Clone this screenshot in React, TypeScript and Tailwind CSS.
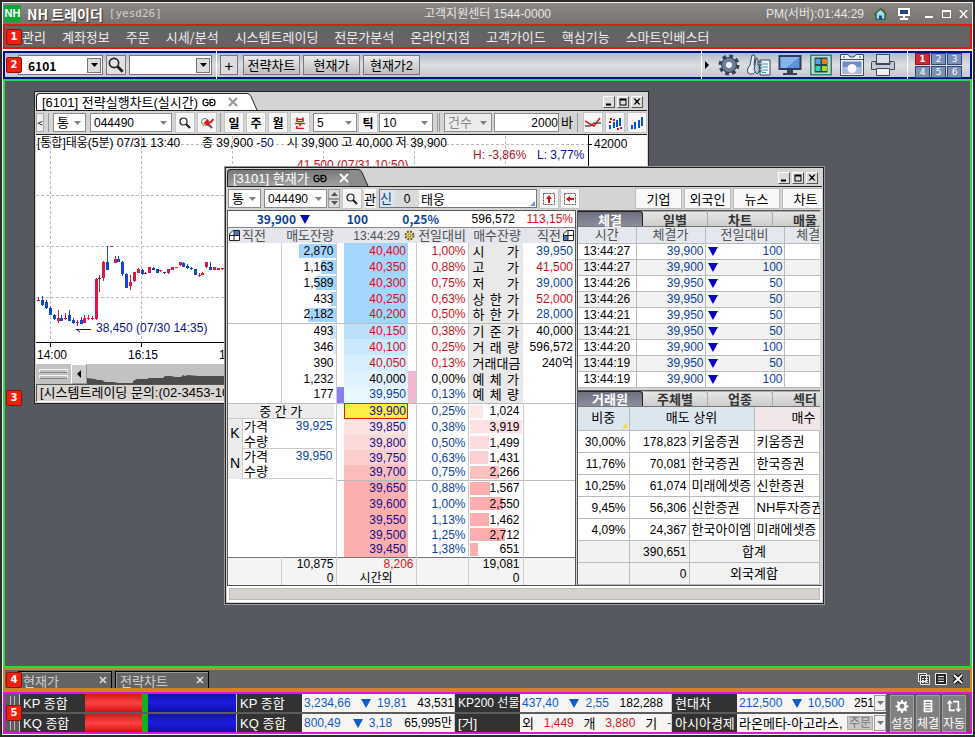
import { useState } from "react";
import type { ReactNode } from "react";

const NUM = "font-['Liberation_Sans','Noto_Sans_CJK_KR',sans-serif] text-[12px]";
const TXT = "font-['Liberation_Sans','Noto_Sans_CJK_KR',sans-serif] text-[13px]";
const BLUE = "text-[#0c3f9e]";
const RED = "text-[#cc1018]";

function Badge({ n, place }: { n: number; place: string }) {
  return (
    <span
      className={`absolute z-20 flex h-4 w-4 items-center justify-center rounded-[2px] border border-[#8a1408] bg-[#f02010] font-['DejaVu_Sans',sans-serif] text-[10px] leading-none font-bold text-white ${place}`}
    >
      {n}
    </span>
  );
}

function Caret({ className = "" }: { className?: string }) {
  return (
    <svg viewBox="0 0 7 4" className={`h-1 w-[7px] fill-current ${className}`} aria-hidden="true">
      <path d="M0 0h7L3.500 4z" />
    </svg>
  );
}

function Down({ className = "" }: { className?: string }) {
  return (
    <svg viewBox="0 0 10 9" className={`h-[9px] w-[10px] shrink-0 fill-current ${className}`} aria-hidden="true">
      <path d="M0 0h10L5 9z" />
    </svg>
  );
}

function Search({ className = "h-3 w-3" }: { className?: string }) {
  return (
    <svg viewBox="0 0 12 12" className={className} fill="none" stroke="#222" aria-hidden="true">
      <circle cx="4.500" cy="4.500" r="3.500" strokeWidth="1.200" />
      <path d="M7 7l4 4" strokeWidth="2.200" />
    </svg>
  );
}

function Select({ label, value, width, off = false }: { label: string; value: string; width: string; off?: boolean }) {
  return (
    <span className={`relative flex h-[19px] shrink-0 items-center border border-[#8c8c8c] ${off ? "bg-[#ececec] text-[#888]" : "bg-white text-black"} ${width}`}>
      <select aria-label={label} disabled={off} defaultValue={value} className={`h-full w-full appearance-none pl-[3px] leading-none ${/\d/.test(value) ? NUM : TXT}`}>
        <option>{value}</option>
      </select>
      <Caret className="pointer-events-none absolute right-1 text-[#808080]" />
    </span>
  );
}

function Tool({ children, label, color = "text-black" }: { children: ReactNode; label: string; color?: string }) {
  return (
    <button
      aria-label={label}
      className={`flex h-[19px] w-[18px] shrink-0 items-center justify-center border border-[#f8f8f8] bg-[#f6f6f6] text-[12px] leading-none font-bold shadow-[0_0_0_1px_#c4c4c4] ${color}`}
    >
      {children}
    </button>
  );
}

function LinkMark() {
  return (
    <svg viewBox="0 0 14 9" className="h-[9px] w-[14px]" fill="none" stroke="currentColor" strokeWidth="1.200" aria-hidden="true">
      <path d="M6 2.500C5 .8 1 .5 1 4.500s4 3.700 5 2V4.500H3.500M8 2.500C9 .8 13 .5 13 4.500s-4 3.700-5 2V1M8 4.500h3" />
    </svg>
  );
}

function WindowButtons() {
  const shapes = ["M2 6.500h5v2H2z", "M1.500 1.500h7v7h-7zM2.500 3.500v4h5v-4z", "M1.500 1.500h1.500l2 2 2-2h1.500L6 4.700l2.500 2.800H7L5 5.700l-2 1.800H1.500L4 4.700z"];
  const names = ["최소화", "최대화", "닫기"];
  return (
    <span className="flex gap-[2px] pr-1">
      {shapes.map((d, i) => (
        <button key={d} aria-label={names[i]} className="flex h-3 w-3 items-center justify-center border border-t-white border-r-[#555] border-b-[#555] border-l-white bg-[#ddd]">
          <svg viewBox="0 0 10 10" className="h-[10px] w-[10px]" fillRule="evenodd">
            <path d={d} />
          </svg>
        </button>
      ))}
    </span>
  );
}

function TitleTab({ title, active }: { title: string; active: boolean }) {
  return (
    <div className="flex h-[18px] items-end justify-between border-b border-[#222] bg-[#d4d4d4]">
      <div className="flex h-[17px]">
        <div
          className={`flex items-center gap-1 rounded-tl-[4px] border-t border-l border-[#222] pl-[5px] leading-none ${TXT} ${active ? "bg-linear-to-b from-[#777] to-[#a2a2a2] text-white" : "bg-white text-black"}`}
        >
          <span>{title}</span>
          <span className="text-black">
            <LinkMark />
          </span>
          <button aria-label="탭 닫기" className={`ml-[8px] ${active ? "text-white" : "text-[#999]"}`}>
            <svg viewBox="0 0 10 10" className="h-[10px] w-[10px]" stroke="currentColor" strokeWidth="2">
              <path d="M1 1l8 8M9 1L1 9" />
            </svg>
          </button>
        </div>
        <svg viewBox="0 0 20 17" className="h-[17px] w-5" aria-hidden="true">
          <path d="M0 .5h9q3 0 4 3L19 17H0z" fill={active ? "#8c8c8c" : "#fff"} />
          <path d="M0 .5h9q3 0 4 3L19 17" fill="none" stroke="#222" />
        </svg>
      </div>
      <div className="self-center">
        <WindowButtons />
      </div>
    </div>
  );
}

/* ---------- top bars ---------- */

const MENU = ["관리", "계좌정보", "주문", "시세/분석", "시스템트레이딩", "전문가분석", "온라인지점", "고객가이드", "핵심기능", "스마트인베스터"];

function TitleBar() {
  return (
    <header className="grid h-[21px] grid-cols-3 items-center bg-linear-to-b from-[#8c8885] to-[#757270] text-[#e6e6e6]">
      <div className="flex items-center gap-[6px] pl-[1px]">
        <span className="flex h-[17px] w-[17px] items-center justify-center bg-[#12a53a] font-['Liberation_Sans',sans-serif] text-[11px] font-bold text-white">NH</span>
        <h1 className="text-[14px] leading-none font-bold text-white [text-shadow:1px_1px_1px_#333]">NH 트레이더</h1>
        <span className="font-['DejaVu_Sans_Mono',monospace] text-[11px] leading-none text-[#d0d0d0]">[yesd26]</span>
      </div>
      <div className={`text-center leading-none ${NUM}`}>고객지원센터 1544-0000</div>
      <div className="flex items-center justify-end pr-1">
        <span className={`mr-[10px] leading-none ${NUM}`}>PM(서버):01:44:29</span>
        <button aria-label="홈" className="mr-[11px]">
          <svg viewBox="0 0 13 12" className="h-3 w-[13px]">
            <path d="M9 1h2v3H9z" fill="#d33" />
            <path d="M.5 6.500L6.500.8l6 5.700H11v5H2v-5z" fill="#a8d8f0" stroke="#1f6a30" strokeWidth="1.400" />
            <path d="M5 7.500h3v4H5z" fill="#244a80" />
          </svg>
        </button>
        <button aria-label="화면" className="mr-[15px]">
          <svg viewBox="0 0 12 12" className="h-3 w-3">
            <path d="M0 0h12v8H0z" fill="#fff" />
            <path d="M2 2h8v4H2z" fill="#2a4a70" />
            <path d="M5 8h2v2h3v2H2v-2h3z" fill="#fff" />
          </svg>
        </button>
        <span className="flex gap-2">
          {["M0 7h8v2H0z", "M0 1h9v8H0zM1 3v5h7V3z", "M0 1h2l2.500 3L7 1h2L5.500 5 9 9H7L4.500 6 2 9H0l3.500-4z"].map((d, i) => (
            <button key={d} aria-label={["최소화", "최대화", "닫기"][i]}>
              <svg viewBox="0 0 9 10" className="h-[10px] w-[9px] fill-white" fillRule="evenodd">
                <path d={d} />
              </svg>
            </button>
          ))}
        </span>
      </div>
    </header>
  );
}

function GearIcon() {
  return (
    <svg viewBox="0 0 22 22" className="h-[22px] w-[22px]">
      <circle cx="11" cy="11" r="8.500" fill="none" stroke="#34445c" strokeWidth="4" strokeDasharray="3.600 3.075" />
      <circle cx="11" cy="11" r="5.500" fill="none" stroke="#34445c" strokeWidth="5" />
      <circle cx="11" cy="11" r="5" fill="none" stroke="#6c7f9a" strokeWidth="4" />
      <circle cx="11" cy="11" r="3" fill="#eef2f6" />
    </svg>
  );
}

function KeysIcon() {
  return (
    <svg viewBox="0 0 24 22" className="h-[22px] w-6" stroke="#33485e">
      <path d="M5 1q3-1 3 2l-1 8q4 2 2 6t-6 3-2-6l2-3z" fill="#e6ebef" />
      <path d="M9 4q2 0 2 2v5q3 1 2 6l-3 3-3-4z" fill="#bcc8d4" />
      <path d="M13 6h10v15H13z" fill="#eef8fb" />
      <path d="M15 10h6M15 13h6M15 16h6M15 18.500h4" stroke="#3a9ab5" />
      <path d="M11 8h4M11 11h4M11 14h4M11 17h4" />
    </svg>
  );
}

function MonitorIcon() {
  return (
    <svg viewBox="0 0 24 22" className="h-[22px] w-6">
      <path d="M.5 1h23v15H.5z" fill="#2b3d58" />
      <path d="M2.500 3h19v11h-19z" fill="#5c93dc" />
      <path d="M2.500 3h19L8 14H2.500z" fill="#86b4ee" />
      <path d="M9 16h6v3h4v2H5v-2h4z" fill="#344459" />
    </svg>
  );
}

function TilesIcon() {
  return (
    <svg viewBox="0 0 24 22" className="h-[22px] w-6">
      <path d="M1 .5h22v21H1z" fill="#36806f" />
      <path d="M2.500 2h19v18h-19z" fill="#b9dccb" />
      <path d="M5.500 3.500h13v15h-13z" fill="#274a47" />
      <path d="M6.500 5h5v5h-5z" fill="#49a7dc" />
      <path d="M13 5h5v5h-5z" fill="#e8791c" />
      <path d="M6.500 12h5v5h-5z" fill="#32d5b5" />
      <path d="M13 12h5v5h-5z" fill="#a5dc18" />
    </svg>
  );
}

function CaptureIcon() {
  return (
    <svg viewBox="0 0 24 22" className="h-[22px] w-6">
      <path d="M.5.5H8L10 3h4l2-2.500h7.500v21H.5z" fill="#f2f4f7" stroke="#3a4a62" />
      <path d="M1 5.500h22" stroke="#3a4a62" />
      <path d="M2.500 7.500h19v12h-19z" fill="#6f8cc4" />
      <path d="M2.500 13h19v6.500h-19z" fill="#a9bce0" />
      <circle cx="12" cy="14.500" r="4.500" fill="#f6f8fc" />
      <path d="M3 3h2M19 3h2" stroke="#3a4a62" />
    </svg>
  );
}

function PrinterIcon() {
  return (
    <svg viewBox="0 0 24 22" className="h-[22px] w-6" stroke="#3d4958">
      <path d="M5.500.5h13v9h-13z" fill="#d8dde4" />
      <path d="M1.500 7.500q-1 0-1 1v7h23v-7q0-1-1-1H19v3H5v-3z" fill="#c3cad4" />
      <path d="M5 10.500h14" />
      <path d="M5.500 14.500h13v7h-13z" fill="#eef0f3" />
    </svg>
  );
}

function MainToolbar() {
  return (
    <div className="relative flex h-7 items-center border-2 border-[#0b0b88] bg-linear-to-b from-[#b4bac6] via-[#dcdee2] to-[#c2c8d2]">
      <Badge n={2} place="top-1 left-px" />
      <div className="flex flex-1 items-center gap-[3px] pl-[13px]">
        <label className="relative flex h-5 w-[85px] items-center border border-[#777] bg-white">
          <input aria-label="화면번호" defaultValue="6101" className="w-[66px] pl-[9px] text-[12px] leading-none font-bold" />
          <span className="absolute right-px flex h-[15px] w-[14px] items-center justify-center border border-[#777] bg-[#ddd]">
            <Caret />
          </span>
        </label>
        <button aria-label="검색" className="flex h-5 w-5 items-center justify-center border border-[#777] bg-[#e2e2e4]">
          <Search className="h-4 w-4" />
        </button>
        <label className="relative flex h-5 w-[83px] items-center border border-[#777] bg-white">
          <input aria-label="종목" className="w-16" />
          <span className="absolute right-px flex h-[15px] w-[14px] items-center justify-center border border-[#777] bg-[#ddd]">
            <Caret />
          </span>
        </label>
        <span className="ml-px h-7 w-px bg-white" />
        <button aria-label="추가" className="mr-[2px] h-5 w-[18px] border border-[#777] bg-[#dcdcde] text-[15px] leading-none">
          +
        </button>
        {["전략차트", "현재가", "현재가2"].map((t) => (
          <button key={t} className={`h-5 w-[57px] border border-[#777] bg-linear-to-b from-[#ececee] to-[#bdbdc0] leading-none whitespace-nowrap ${TXT}`}>
            {t}
          </button>
        ))}
      </div>
      <div className="flex items-center gap-[7px]">
        <span className="flex h-7 w-[10px] items-center border-l border-white pl-[3px]">
          <svg viewBox="0 0 4 8" className="h-2 w-1">
            <path d="M0 0l4 4-4 4z" />
          </svg>
        </span>
        {[GearIcon, KeysIcon, MonitorIcon, TilesIcon, CaptureIcon, PrinterIcon].map((Icon, i) => (
          <button key={i} aria-label={["설정", "인증", "모니터", "화면 배치", "화면 캡처", "인쇄"][i]}>
            <Icon />
          </button>
        ))}
        <span className="ml-[5px] h-7 w-px bg-white" />
        <div className="mr-2 grid grid-cols-3 gap-px">
          {[1, 2, 3, 4, 5, 6].map((n) => (
            <button
              key={n}
              className={`h-[12px] w-[15px] border font-['DejaVu_Sans',sans-serif] text-[9px] leading-[10px] text-white ${n === 1 ? "border-[#8a1a20] bg-[#d02830] font-bold" : "border-[#2e4a78] bg-[#7c90b8]"}`}
            >
              {n}
            </button>
          ))}
        </div>
      </div>
    </div>
  );
}

/* ---------- chart window ---------- */

// x, wick top, wick bottom, body top, body bottom, 1 = rise
const CANDLES: [number, number, number, number, number, number][] = [
  [38, 297, 301, 300, 301, 1], [42, 296, 306, 300, 305, 0], [46, 300, 309, 302, 308, 0], [50, 306, 315, 308, 315, 0],
  [54, 314, 320, 315, 319, 0], [58, 310, 323, 318, 321, 1], [61, 315, 321, 318, 321, 0], [65, 313, 320, 318, 319, 1],
  [69, 310, 321, 315, 321, 0], [73, 318, 324, 320, 323, 0], [77, 320, 326, 322, 323, 1], [81, 317, 324, 320, 324, 0],
  [84, 315, 323, 318, 323, 1], [88, 315, 320, 318, 319, 1], [92, 316, 320, 318, 319, 1], [96, 278, 320, 279, 319, 1],
  [99, 275, 292, 278, 279, 1], [103, 261, 281, 262, 278, 1], [107, 246, 270, 262, 270, 0], [111, 246, 247, 246, 247, 1],
  [115, 256, 263, 259, 263, 1], [118, 256, 262, 259, 262, 0], [122, 261, 276, 262, 274, 0], [126, 273, 288, 274, 288, 0],
  [130, 275, 290, 282, 286, 1], [134, 272, 282, 272, 281, 1], [138, 268, 273, 269, 273, 1], [142, 269, 275, 270, 274, 0],
  [145, 272, 274, 273, 274, 1], [149, 267, 273, 267, 273, 1], [153, 267, 270, 268, 270, 0], [157, 269, 273, 269, 273, 0],
  [160, 270, 272, 270, 271, 1], [164, 272, 274, 272, 273, 0], [168, 269, 274, 269, 273, 1], [172, 267, 270, 267, 270, 1],
  [176, 267, 268, 267, 268, 1], [180, 262, 266, 262, 265, 1], [183, 262, 267, 263, 267, 0], [187, 264, 269, 266, 268, 0],
  [191, 267, 270, 268, 269, 0], [195, 269, 275, 269, 275, 0], [199, 273, 277, 275, 276, 1], [202, 272, 275, 273, 275, 1],
  [206, 262, 268, 262, 267, 1], [210, 262, 270, 267, 270, 0], [214, 267, 270, 267, 270, 1], [218, 268, 270, 268, 270, 1],
  [222, 268, 270, 268, 269, 1],
];

function ChartWindow() {
  return (
    <section className="absolute top-[10px] left-[29px] flex h-[313px] w-[615px] flex-col border border-[#222] bg-[#d4d4d4] p-px">
      <TitleTab title="[6101] 전략실행차트(실시간)" active={false} />
      <div className="flex h-6 shrink-0 items-center gap-1 border-b border-[#222]">
        <button aria-label="접기" className="h-[19px] w-2 border border-[#aaa] bg-[#eee] text-[10px] leading-none">
          &lt;
        </button>
        <span className="h-[19px] w-px bg-[#999]" />
        <Select label="시장" value="통" width="w-[33px]" />
        <Select label="종목코드" value="044490" width="w-[82px]" />
        <Tool label="검색">
          <Search />
        </Tool>
        <Tool label="찾기">
          <svg viewBox="0 0 14 12" className="h-3 w-[14px]" fill="none">
            <circle cx="5" cy="5" r="3.500" stroke="#777" />
            <path d="M8 7l4 4" stroke="#555" strokeWidth="2" />
            <path d="M13 2q-1 4-6 4M8 3L5 6l4 2.500" stroke="#e01010" strokeWidth="2" />
          </svg>
        </Tool>
        <span className="h-[19px] w-px bg-[#999]" />
        <Tool label="일">일</Tool>
        <Tool label="주">주</Tool>
        <Tool label="월">월</Tool>
        <Tool label="분" color="text-[#e01010]">
          분
        </Tool>
        <div className="flex items-center gap-[2px]">
          <Select label="분 주기" value="5" width="w-[44px]" />
          <Tool label="틱">틱</Tool>
          <Select label="틱 주기" value="10" width="w-[54px]" />
          <span className="mx-[2px] h-[19px] w-[3px] border-x border-[#999]" />
          <Select label="건수" value="건수" width="w-[48px]" off />
          <label className={`flex items-center gap-[2px] leading-none ${NUM}`}>
            <input aria-label="봉 개수" defaultValue="2000" className="h-[19px] w-[65px] border border-[#8c8c8c] bg-white text-right" />
            <span className="text-[13px]">바</span>
          </label>
          <span className="mx-[2px] h-[19px] w-px bg-[#999]" />
        </div>
        <Tool label="추세">
          <svg viewBox="0 0 16 14" className="h-[14px] w-4" fill="none">
            <path d="M0 10h5l4-3h7" stroke="#555" strokeWidth="1.500" />
            <path d="M0 5l5 3 4 2 6-8" stroke="#d01818" strokeWidth="1.500" />
          </svg>
        </Tool>
        <Tool label="봉 점">
          <svg viewBox="0 0 14 14" className="h-[14px] w-[14px]" fill="#0c4fd0">
            <path d="M1 9h2v4H1zM5 6h2v6H5zM8 4h2v7H8zM11 2h2v8h-2z" />
            <path d="M2 2h2v2H2zM5 3h2v2H5zM1 5h2v2H1zM12 11h2v2h-2zM9 12h2v2H9z" fill="#e01010" />
          </svg>
        </Tool>
        <Tool label="봉">
          <svg viewBox="0 0 14 14" className="h-[14px] w-[14px]" fill="#0c4fd0">
            <path d="M1 9h2v4H1zM4 6h2v7H4zM8 4h2v8H8zM11 1h2v9h-2z" />
          </svg>
        </Tool>
      </div>
      <svg viewBox="36 135 611 229" preserveAspectRatio="xMinYMin slice" className={`h-[229px] w-full shrink-0 bg-white ${NUM}`}>
        <path d="M50.500 136v206M141.500 136v206M232.500 136v206M323.500 136v206M414.500 136v206M505.500 136v206M36 144.500h552M36 195.500h552M36 246.500h552M36 297.500h552" stroke="#bbb" strokeDasharray="3 2" />
        <path d="M36 342.500h611M588.500 135v207M588 144.500h4M50.500 342v5M141.500 342v5M232.500 342v5" stroke="#000" fill="none" />
        {CANDLES.map(([x, wt, wb, bt, bb, up]) => (
          <g key={x} fill={up ? "#d81848" : "#1048d0"}>
            <rect x={x} y={wt} width="1" height={wb - wt} />
            <rect x={x - 1} y={bt} width="3" height={bb - bt} />
          </g>
        ))}
        <path d="M76 329.500h15M76 329l4 3" stroke="#10108c" fill="none" />
        <text x="37" y="147">[통합]태웅(5분) 07/31 13:40</text>
        <text x="202" y="147">
          종 39,900 <tspan fill="#10108c">-50</tspan>
        </text>
        <text x="287" y="147">시 39,900 고 40,000 저 39,900</text>
        <text x="473" y="159" fill="#b01020">H: -3,86%</text>
        <text x="537" y="159" fill="#10108c">L: 3,77%</text>
        <text x="297" y="169" fill="#c01020">41,500 (07/31 10:50)</text>
        <text x="594" y="148">42000</text>
        <text x="96" y="332" fill="#10108c">38,450 (07/30 14:35)</text>
        <text x="37" y="359">14:00</text>
        <text x="128" y="359">16:15</text>
        <text x="219" y="359">10:10</text>
      </svg>
      <div className="flex h-5 shrink-0 bg-[#c2c2c2]">
        <span className="m-[3px] mt-[5px] flex h-[10px] w-[29px] flex-col justify-between">
          <span className="h-1 border border-[#f4f4f4] border-b-[#888]" />
          <span className="h-1 border border-[#f4f4f4] border-b-[#888]" />
        </span>
        <button aria-label="왼쪽" className="flex w-4 items-center justify-center border border-t-white border-r-[#999] border-b-[#999] border-l-white bg-[#cdcdcd]">
          <svg viewBox="0 0 4 8" className="h-2 w-1">
            <path d="M4 0v8L0 4z" />
          </svg>
        </button>
        <svg viewBox="0 0 140 20" className="h-5 w-[140px]" fill="#4c4c4c">
          <path d="M0 14l8 1 2 1h5l3 2h8l6 1h14v-2l4-2h10l2-1h14l2-2h6l4 1h6l2-2 2 1 3-1 10 1h31v10H0z" />
        </svg>
      </div>
      <div className={`flex-1 border border-t-[#555] border-r-white border-b-white border-l-[#555] bg-[#d8d4d0] pl-[3px] leading-[15px] ${TXT}`}>[시스템트레이딩 문의:(02-3453-1052)]</div>
    </section>
  );
}

/* ---------- quote window ---------- */

const ASKS: [string, string, string, string[], string, string, number][] = [
  ["2,870", "40,400", "1,00%", ["시", "가"], "39,950", BLUE, 37],
  ["1,163", "40,350", "0,88%", ["고", "가"], "41,500", RED, 15],
  ["1,589", "40,300", "0,75%", ["저", "가"], "39,000", BLUE, 20],
  ["433", "40,250", "0,63%", ["상", "한", "가"], "52,000", RED, 5],
  ["2,182", "40,200", "0,50%", ["하", "한", "가"], "28,000", BLUE, 28],
  ["493", "40,150", "0,38%", ["기", "준", "가"], "40,000", "text-black", 6],
  ["346", "40,100", "0,25%", ["거", "래", "량"], "596,572", "text-black", 3],
  ["390", "40,050", "0,13%", ["거래대금"], "240억", "text-black", 0],
  ["1,232", "40,000", "0,00%", ["예", "체", "가"], "", "", 0],
  ["177", "39,950", "0,13%", ["예", "체", "량"], "", "", 0],
];

const BIDS: [string, string, string, number][] = [
  ["39,900", "0,25%", "1,024", 13], ["39,850", "0,38%", "3,919", 52], ["39,800", "0,50%", "1,499", 19],
  ["39,750", "0,63%", "1,431", 18], ["39,700", "0,75%", "2,266", 29], ["39,650", "0,88%", "1,567", 20],
  ["39,600", "1,00%", "2,550", 33], ["39,550", "1,13%", "1,462", 19], ["39,500", "1,25%", "2,712", 35],
  ["39,450", "1,38%", "651", 8],
];

const ASK_BG = ["bg-[#a4d6fc]", "bg-[#a4d6fc]", "bg-[#a4d6fc]", "bg-[#a4d6fc]", "bg-[#a4d6fc]", "bg-[#bce0fc]", "bg-[#cae8fe]", "bg-[#d6eefe]", "bg-[#e0f2fe]", "bg-[#e8f6fe]"];
const ASK_BAR = ["bg-[#a4d6fc]", "bg-[#a4d6fc]", "bg-[#a4d6fc]", "bg-[#a4d6fc]", "bg-[#a4d6fc]", "bg-[#cfe6fa]", "bg-[#dceefc]", "bg-white", "bg-white", "bg-white"];
const BID_BG = ["bg-[#fbee45]", "bg-[#fde2e2]", "bg-[#fddada]", "bg-[#fccece]", "bg-[#fbbcbc]", "bg-[#fdaeae]", "bg-[#fdaeae]", "bg-[#fdaeae]", "bg-[#fdaeae]", "bg-[#fdaeae]"];
const BAR_BG = ["bg-[#fde6ea]", "bg-[#fde0e4]", "bg-[#fddade]", "bg-[#fcd0d2]", "bg-[#fcc0c0]", "bg-[#fdaeae]", "bg-[#fdaeae]", "bg-[#fdaeae]", "bg-[#fdaeae]", "bg-[#fdaeae]"];

function PageMark({ flip = false }: { flip?: boolean }) {
  return (
    <svg viewBox="0 0 11 11" className="h-[11px] w-[11px]">
      <path d="M.5 4L4 .5h6.500v10H.5z" fill="#fff" stroke="#222" />
      <path d={flip ? "M1 6h4v4H1z" : "M5 1h5v4.500H5z"} fill="#4878b8" />
      <path d="M5 1v9M1 5.500h9" stroke="#222" />
    </svg>
  );
}

function OrderBook() {
  return (
    <div className="flex w-[349px] shrink-0 flex-col border border-[#555] bg-white">
      <div className="grid h-[17px] shrink-0 grid-cols-[82px_62px_71px_76px_58px] items-center border-b border-[#888] text-right leading-none">
        <span className={`flex items-center justify-end gap-1 text-[12px] font-bold ${BLUE}`}>
          39,900
          <Down className="text-[#0c0cb8]" />
        </span>
        <b className={`pr-1 text-[12px] ${BLUE}`}>100</b>
        <b className={`pr-1 text-[12px] ${BLUE}`}>0,25%</b>
        <span className={`pr-1 ${NUM}`}>596,572</span>
        <span className={`pr-1 ${NUM} ${RED}`}>113,15%</span>
      </div>
      <table className={`w-full table-fixed border-collapse text-right ${NUM}`}>
        <colgroup>
          <col className="w-[53px]" />
          <col className="w-[55px]" />
          <col className="w-2" />
          <col className="w-16" />
          <col className="w-2" />
          <col className="w-[52px]" />
          <col className="w-[55px]" />
          <col />
        </colgroup>
        <thead className="bg-[#e4e6ec] text-[#505050]">
          <tr className="h-[15px] text-[13px] leading-[14px] whitespace-nowrap">
            <th className="p-0 font-normal">
              <span className="flex items-center gap-[2px] pl-px">
                <PageMark />
                직전
              </span>
            </th>
            <th className="p-0 pr-[2px] font-normal">매도잔량</th>
            <th className="p-0" />
            <th className="p-0 pr-2 text-[12px] font-normal">13:44:29</th>
            <th className="p-0">
              <svg viewBox="0 0 11 11" className="-ml-1 h-[11px] w-[11px]">
                <circle cx="5.500" cy="5.500" r="4" fill="#f4e050" stroke="#6a6040" strokeWidth="2" strokeDasharray="2 1.140" />
                <circle cx="5.500" cy="5.500" r="1.500" fill="#fff" stroke="#6a6040" />
              </svg>
            </th>
            <th className="p-0 pr-[2px] font-normal">전일대비</th>
            <th className="p-0 pr-[2px] font-normal">매수잔량</th>
            <th className="p-0 font-normal">
              <span className="flex items-center justify-end gap-[2px] pr-px">
                직전
                <PageMark flip />
              </span>
            </th>
          </tr>
        </thead>
        <tbody>
          {ASKS.map(([qty, price, pct, name, value, tone, bar], i) => (
            <tr key={price} className={`h-4 leading-[15px] ${i === 5 ? "border-t border-[#bbb]" : ""}`}>
              <td className="border-r border-[#ccc] p-0" />
              <td className="relative border-r border-[#ccc] p-0 pr-[2px]">
                <span className={`absolute top-px right-0 h-[14px] ${ASK_BAR[i]}`} style={{ width: bar }} />
                <span className="relative">{qty}</span>
              </td>
              <td className={`p-0 ${i === 9 ? "bg-[#8880f0]" : ""}`} />
              <td className={`p-0 pr-[2px] ${ASK_BG[i]} ${i < 8 ? RED : i === 9 ? BLUE : "text-black"}`}>{price}</td>
              <td className={`border-r border-[#ccc] p-0 ${i > 7 ? "bg-[#f2b8d2]" : ""}`} />
              <td className={`border-r border-[#ccc] p-0 pr-[2px] ${i < 8 ? RED : i === 9 ? BLUE : "text-black"}`}>{pct}</td>
              <td className="bg-[#e9e9e9] p-0 px-1 text-[13px] whitespace-nowrap">
                <span className="flex justify-between">
                  {name.map((c) => (
                    <span key={c}>{c}</span>
                  ))}
                </span>
              </td>
              <td className={`p-0 pr-[2px] ${tone}`}>{value}</td>
            </tr>
          ))}
          {BIDS.map(([price, pct, qty, bar], i) => (
            <tr key={price} className={`leading-[14px] ${i % 5 < 2 ? "h-4" : "h-[15px]"} ${i % 5 === 0 ? "border-t border-[#bbb]" : ""}`}>
              {i === 0 && (
                <td colSpan={2} rowSpan={10} className="border-r border-[#ccc] p-0 pr-[2px] align-top">
                  <div className="h-[15px] border-b border-[#ccc] bg-[#ececec] text-center text-[13px] leading-[15px]">중 간 가</div>
                  {[["K", "39,925"], ["N", "39,950"]].map(([m, v]) => (
                    <div key={m} className="grid h-[30px] grid-cols-[15px_1fr_auto] border-b border-[#ccc] text-left leading-[15px]">
                      <span className="row-span-2 flex items-center justify-center border-r border-[#ccc] bg-[#ececec] text-[14px]">{m}</span>
                      <span className="pl-px text-[13px]">가격</span>
                      <span className={`pr-px ${BLUE}`}>{v}</span>
                      <span className="pl-px text-[13px]">수량</span>
                    </div>
                  ))}
                </td>
              )}
              <td className="p-0" />
              <td className={`p-0 pr-[2px] text-[#10108c] ${BID_BG[i]} ${i === 0 ? "outline outline-1 -outline-offset-1 outline-[#e02010]" : ""}`}>{price}</td>
              <td className="border-r border-[#ccc] p-0" />
              <td className={`border-r border-[#ccc] p-0 pr-[2px] ${BLUE}`}>{pct}</td>
              <td className="relative border-r border-[#ccc] p-0 pr-[3px]">
                <span className={`absolute top-px left-px h-[13px] ${BAR_BG[i]}`} style={{ width: bar }} />
                <span className="relative">{qty}</span>
              </td>
              <td className="p-0" />
            </tr>
          ))}
        </tbody>
        <tfoot className="bg-[#f4f4f4]">
          {[["10,875", "8,206", "19,081"], ["0", "시간외", "0"]].map(([a, b, c], i) => (
            <tr key={b} className={`h-[14px] leading-[13px] ${i === 0 ? "border-t border-[#777]" : ""}`}>
              <td className="border-r border-[#ccc] p-0" />
              <td className="border-r border-[#ccc] p-0 pr-[2px]">{a}</td>
              <td colSpan={3} className={`border-r border-[#ccc] p-0 ${i === 0 ? "pr-[2px] text-[#e01010]" : "text-center"}`}>{b}</td>
              <td className="border-r border-[#ccc] p-0" />
              <td className="border-r border-[#ccc] p-0 pr-[3px]">{c}</td>
              <td className="p-0" />
            </tr>
          ))}
        </tfoot>
      </table>
    </div>
  );
}

function PanelTabs({ names }: { names: string[] }) {
  const [on, setOn] = useState(0);
  return (
    <div className="flex h-4 shrink-0 border-b border-[#777]" role="tablist">
      {names.map((t, i) => (
        <button
          key={t}
          role="tab"
          aria-selected={i === on}
          onClick={() => setOn(i)}
          className={`h-[15px] w-[65px] shrink-0 rounded-tr-[3px] border-t border-r text-[13px] leading-none font-bold ${i === on ? "border-[#222] bg-linear-to-b from-[#6e7080] to-[#8c8e9c] text-white" : "border-[#aaa] bg-linear-to-b from-[#e6e6e6] to-[#cdcdcd] text-[#333]"}`}
        >
          {t}
        </button>
      ))}
    </div>
  );
}

const TRADES: [string, string, string][] = [
  ["13:44:27", "39,900", "100"], ["13:44:27", "39,900", "100"], ["13:44:26", "39,950", "50"],
  ["13:44:26", "39,950", "50"], ["13:44:21", "39,950", "50"], ["13:44:21", "39,950", "50"],
  ["13:44:20", "39,900", "100"], ["13:44:19", "39,950", "50"], ["13:44:19", "39,900", "100"],
];

const BROKERS: [string, string, string, string][] = [
  ["30,00%", "178,823", "키움증권", "키움증권"],
  ["11,76%", "70,081", "한국증권", "한국증권"],
  ["10,25%", "61,074", "미래에셋증", "신한증권"],
  ["9,45%", "56,306", "신한증권", "NH투자증권"],
  ["4,09%", "24,367", "한국아이엠", "미래에셋증"],
];

function SidePanel() {
  return (
    <div className="ml-px flex min-w-0 flex-1 flex-col overflow-hidden border-t border-l border-[#555] bg-[#d4d4d4]">
      <PanelTabs names={["체결", "일별", "차트", "매물"]} />
      <table className={`w-[267px] table-fixed border-collapse bg-white text-right ${NUM}`}>
        <colgroup>
          <col className="w-[58px]" />
          <col className="w-[69px]" />
          <col className="w-[79px]" />
          <col />
        </colgroup>
        <thead>
          <tr className="h-4 bg-[#e4e8ee] text-center text-[13px] leading-[15px] text-[#505050]">
            {["시간", "체결가", "전일대비", "체결량"].map((h) => (
              <th key={h} className="border-r border-b border-[#bbb] p-0 font-normal">
                {h}
              </th>
            ))}
          </tr>
        </thead>
        <tbody>
          {TRADES.map(([t, p, d], i) => (
            <tr key={i} className={`h-4 leading-[15px] ${i % 2 ? "bg-[#f2f2f2]" : "bg-white"}`}>
              <td className="border-r border-b border-[#bbb] p-0 text-center">{t}</td>
              <td className={`border-r border-b border-[#bbb] p-0 pr-px ${BLUE}`}>{p}</td>
              <td className={`border-r border-b border-[#bbb] p-0 ${BLUE}`}>
                <span className="flex items-center justify-between pr-px pl-[2px]">
                  <Down className="text-[#0808c0]" />
                  {d}
                </span>
              </td>
              <td className="border-b border-[#bbb] p-0" />
            </tr>
          ))}
        </tbody>
      </table>
      <div className="mt-[2px] border-t border-[#555]" />
      <PanelTabs names={["거래원", "주체별", "업종", "섹터"]} />
      <table className={`w-[302px] table-fixed border-collapse bg-white text-left ${TXT}`}>
        <colgroup>
          <col className="w-[51px]" />
          <col className="w-[60px]" />
          <col className="w-[65px]" />
          <col className="w-[65px]" />
          <col />
        </colgroup>
        <thead>
          <tr className="h-6 text-center leading-[18px]">
            <th className="relative border-r border-b border-[#bbb] bg-[#dce6ef] p-0 font-normal">
              비중
              <svg viewBox="0 0 5 5" className="absolute right-[2px] bottom-[2px] h-[5px] w-[5px] fill-[#f4dc20]">
                <path d="M5 0v5H0z" />
              </svg>
            </th>
            <th colSpan={2} className="border-r border-b border-[#bbb] bg-[#dce6ef] p-0 font-normal">
              매도 상위
            </th>
            <th colSpan={2} className="border-b border-[#bbb] bg-[#f1e6e8] p-0 font-normal">
              매수 상위
            </th>
          </tr>
        </thead>
        <tbody>
          {BROKERS.map(([w, n, s, b]) => (
            <tr key={w} className="h-[22px] leading-[18px] whitespace-nowrap">
              <td className="border-r border-b border-[#bbb] p-0 pr-[3px] text-right text-[12px]">{w}</td>
              <td className="border-r border-b border-[#bbb] p-0 pr-[2px] text-right text-[12px]">{n}</td>
              <td className="border-r border-b border-[#bbb] p-0 pl-[2px]">{s}</td>
              <td className="border-r border-b border-[#bbb] p-0 pl-[2px]">{b}</td>
              <td className="border-b border-[#bbb] p-0" />
            </tr>
          ))}
          {[["390,651", "합계"], ["0", "외국계합"]].map(([n, t]) => (
            <tr key={t} className="h-[22px] bg-[#f2f2f2] leading-[18px]">
              <td className="border-r border-b border-[#bbb] p-0" />
              <td className="border-r border-b border-[#bbb] p-0 pr-[2px] text-right text-[12px]">{n}</td>
              <td colSpan={2} className="border-r border-b border-[#bbb] p-0 text-center">
                {t}
              </td>
              <td className="border-b border-[#bbb] p-0" />
            </tr>
          ))}
        </tbody>
      </table>
    </div>
  );
}

function QuoteWindow() {
  return (
    <section className="absolute top-[86px] left-[220px] flex h-[437px] w-[599px] flex-col border border-[#222] bg-[#d4d4d4] p-px shadow-[0_0_0_1px_#999]">
      <TitleTab title="[3101] 현재가" active />
      <div className="flex h-[23px] shrink-0 items-center gap-[3px] overflow-hidden pl-px">
        <Select label="시장" value="통" width="w-[33px]" />
        <Select label="종목코드" value="044490" width="w-[63px]" />
        <span className="-ml-[2px] flex h-[19px] w-3 flex-col">
          {["위", "아래"].map((d) => (
            <button key={d} aria-label={d} className="flex h-1/2 w-3 items-center justify-center border border-[#999] bg-[#ddd]">
              <Caret className={`text-[#555] ${d === "위" ? "rotate-180" : ""}`} />
            </button>
          ))}
        </span>
        <Tool label="검색">
          <Search />
        </Tool>
        <button className="h-[19px] w-4 bg-[#f6f6f6] text-[13px] leading-none">관</button>
        <span className={`relative flex h-[19px] w-[158px] items-center border border-[#777] bg-white leading-none ${TXT}`}>
          <span className={`w-[15px] bg-[#dce4ee] py-[2px] ${BLUE}`}>신</span>
          <span className="flex h-full w-6 items-center justify-center bg-[#dadada] text-[12px]">0</span>
          <input aria-label="종목명" defaultValue="태웅" className="min-w-0 flex-1 pl-[2px]" />
          <svg viewBox="0 0 5 5" className="absolute right-px bottom-px h-[5px] w-[5px] fill-[#6a98d8]">
            <path d="M5 0v5H0z" />
          </svg>
        </span>
        {["M7 3l3 4H8v4H6V7H4z", "M3 7l4-3v2h4v2H7v2z"].map((d, i) => (
          <Tool key={d} label={i ? "좌측 정렬" : "상단 정렬"}>
            <svg viewBox="0 0 14 14" className="h-[14px] w-[14px]">
              <path d="M1.500 1.500h11v11h-11z" fill="#fff" stroke="#555" strokeDasharray="2 1" />
              <path d={d} fill="#e01010" />
            </svg>
          </Tool>
        ))}
        <span className="ml-[54px] flex gap-1">
          {["기업", "외국인", "뉴스", "차트"].map((t) => (
            <button key={t} className="h-[19px] w-[45px] shrink-0 bg-[#f8f8f8] text-[13px] leading-none shadow-[0_0_0_1px_#bbb]">
              {t}
            </button>
          ))}
        </span>
      </div>
      <div className="flex min-h-0 flex-1 overflow-hidden pr-[2px]">
        <OrderBook />
        <SidePanel />
      </div>
      <div className="h-[17px] shrink-0 border-t border-[#555] bg-white p-[2px]">
        <div className="h-3 border border-[#bbb] bg-[#d6d2ce]" />
      </div>
    </section>
  );
}

/* ---------- bottom bars ---------- */

function TaskBar() {
  return (
    <div className="relative flex h-6 items-end justify-between border-2 border-b-[4px] border-[#d08420] bg-[#646464] text-[#d0d0d0]">
      <Badge n={4} place="top-0.5 left-px" />
      <div className="flex gap-[3px] pl-[13px]">
        {["현재가", "전략차트"].map((t) => (
          <div key={t} className="flex h-[17px] w-[94px] items-center justify-between border border-b-0 border-black px-1 text-[13px] leading-none shadow-[inset_1px_1px_0_#999]">
            <button>{t}</button>
            <button aria-label={`${t} 닫기`}>
              <svg viewBox="0 0 8 8" className="h-2 w-2" stroke="#ddd" strokeWidth="1.600">
                <path d="M1 1l6 6M7 1L1 7" />
              </svg>
            </button>
          </div>
        ))}
      </div>
      <div className="flex gap-[5px] self-center pr-[6px]">
        <button aria-label="창 목록">
          <svg viewBox="0 0 12 12" className="h-3 w-3" stroke="#eee" fill="#444">
            <path d="M.5.5h8v8h-8zM2.500 2.500h9v9h-9z" />
            <path d="M4 5.500h2M7 5.500h3M4 7.500h2M7 7.500h3M4 9.500h2M7 9.500h3" />
          </svg>
        </button>
        <button aria-label="정렬">
          <svg viewBox="0 0 12 12" className="h-3 w-3" stroke="#eee" fill="#222">
            <path d="M.5.5h11v11H.5zM3 3.500h6M3 6h6M3 8.500h6" />
          </svg>
        </button>
        <button aria-label="모두 닫기">
          <svg viewBox="0 0 12 12" className="h-3 w-3">
            <path d="M2 2l8 8M10 2l-8 8" stroke="#000" strokeWidth="4" />
            <path d="M2 2l8 8M10 2l-8 8" stroke="#fff" strokeWidth="2" />
          </svg>
        </button>
      </div>
    </div>
  );
}

function Gauge() {
  return (
    <div className="flex h-full w-[151px]">
      <span className="w-[57px] bg-linear-to-b from-[#d01818] via-[#ff4040] to-[#d01010]" />
      <span className="w-[6px] bg-[#10b418]" />
      <span className="flex-1 bg-linear-to-b from-[#1414a8] via-[#1c1ce0] to-[#1010a8]" />
    </div>
  );
}

function Tag({ children, size = "text-[13px]" }: { children: ReactNode; size?: string }) {
  return <span className={`flex h-full w-[66px] shrink-0 items-center overflow-hidden border-l border-[#ccc] bg-[#323232] pl-[3px] whitespace-nowrap text-white ${size}`}>{children}</span>;
}

const CELL = "flex h-full items-center justify-between overflow-hidden bg-[#f6f5f3] pl-[2px] whitespace-nowrap text-black";
const UP_BLUE = "text-[#0c5cd0]";

function Fall({ children }: { children: ReactNode }) {
  return (
    <span className={`flex items-center gap-[6px] ${UP_BLUE}`}>
      <Down />
      {children}
    </span>
  );
}

function DropButton() {
  return (
    <button aria-label="펼치기" className="flex h-4 w-3 shrink-0 items-center justify-center border border-[#999] bg-[#f0f0f0] text-[#777]">
      <Caret />
    </button>
  );
}

function TickerBar() {
  return (
    <footer className="relative flex h-[42px] items-center border-2 border-[#e014d8] bg-[#5c5c5c] px-px pr-1">
      <Badge n={5} place="top-[11px] left-px" />
      <span className="mx-1 h-[34px] w-[5px] border-x border-[#bbb]" />
      <div className={`flex min-w-0 flex-1 flex-col gap-[2px] leading-none ${NUM}`}>
        <div className="flex h-[18px]">
          <Tag>KP 종합</Tag>
          <Gauge />
          <Tag>KP 종합</Tag>
          <span className={`w-[152px] ${CELL}`}>
            <span className={UP_BLUE}>3,234,66</span>
            <Fall>19,81</Fall>
            <span>43,531</span>
          </span>
          <Tag size="text-[12px]">KP200 선물</Tag>
          <span className={`w-[151px] pr-2 ${CELL}`}>
            <span className={UP_BLUE}>437,40</span>
            <Fall>2,55</Fall>
            <span>182,288</span>
          </span>
          <Tag>현대차</Tag>
          <span className={`flex-1 ${CELL}`}>
            <span className={UP_BLUE}>212,500</span>
            <Fall>10,500</Fall>
            <span className="flex items-center">
              251
              <DropButton />
            </span>
          </span>
        </div>
        <div className="flex h-[18px]">
          <Tag>KQ 종합</Tag>
          <Gauge />
          <Tag>KQ 종합</Tag>
          <span className={`w-[152px] pr-[2px] ${CELL}`}>
            <span className={UP_BLUE}>800,49</span>
            <Fall>3,18</Fall>
            <span>65,995만</span>
          </span>
          <Tag>[거]</Tag>
          <span className={`w-[151px] ${CELL}`}>
            <span className="text-[13px]">외</span>
            <span className="text-[#d81818]">1,449</span>
            <span className="text-[13px]">개</span>
            <span className="text-[#d81818]">3,880</span>
            <span className="text-[13px]">기</span>
            <span className={UP_BLUE}>-</span>
          </span>
          <Tag>아시아경제</Tag>
          <span className={`flex-1 ${CELL}`}>
            <span className="text-[13px]">라온메타-아고라스,</span>
            <span className="flex items-center gap-px">
              <button className="h-[14px] w-[26px] border border-[#aaa] bg-[#c8c8c8] text-[12px] leading-none whitespace-nowrap text-[#777]">주문</button>
              <DropButton />
            </span>
          </span>
        </div>
      </div>
      <div className="ml-1 flex gap-[2px]">
        {[
          ["설정", "M7 1h2l.4 2 1.500.6L12.600 2.400 14 3.800l-1.200 1.700.6 1.500 2 .4v2l-2 .4-.6 1.500L14 13l-1.400 1.400-1.700-1.200-1.500.6L9 16H7l-.4-2.200-1.500-.6-1.700 1.200L2 13l1.200-1.700-.6-1.500-2-.4v-2l2-.4.6-1.500L2 3.800l1.400-1.400 1.700 1.200L6.600 3zM8 5.500a2.800 2.800 0 100 5.600 2.800 2.800 0 000-5.600z"],
          ["체결", "M3 1h10v14H3zM5 3v1.500h6V3zM5 6v1.500h6V6zM5 9v1.500h6V9zM5 12v1h6v-1z"],
          ["자동", "M3 1l3.500 4H4v7h5v2H2V5H-.5zM13 15l-3.500-4H12V4H7V2h7v9h2.500z"],
        ].map(([t, d]) => (
          <button key={t} className="flex h-[37px] w-6 flex-col items-center justify-between border border-[#a0a0a0] bg-[#808080] pt-[3px] pb-px text-[12px] leading-[15px] whitespace-nowrap text-white">
            <svg viewBox="-1 0 18 16" className="h-[14px] w-4 fill-white" fillRule="evenodd">
              <path d={d} />
            </svg>
            {t}
          </button>
        ))}
      </div>
    </footer>
  );
}

export default function App() {
  return (
    <div className="flex min-h-screen flex-col border-2 border-[#2c2c2c] bg-[#f0f0f0] p-px font-['Noto_Sans_CJK_KR',sans-serif] text-black">
      <TitleBar />
      <nav className="relative flex h-[25px] items-center gap-4 border-2 border-[#e01818] bg-[#646464] pl-[17px] text-[13px] leading-none whitespace-nowrap text-[#eee]">
        <Badge n={1} place="top-[3px] left-px" />
        {MENU.map((m) => (
          <button key={m}>{m}</button>
        ))}
      </nav>
      <div className="h-[2px]" />
      <MainToolbar />
      <main className="relative min-h-[480px] flex-1 overflow-hidden border-2 border-[#22dc48] bg-[#565a60]">
        <ChartWindow />
        <QuoteWindow />
        <Badge n={3} place="top-[309px] left-px" />
      </main>
      <TaskBar />
      <TickerBar />
    </div>
  );
}
